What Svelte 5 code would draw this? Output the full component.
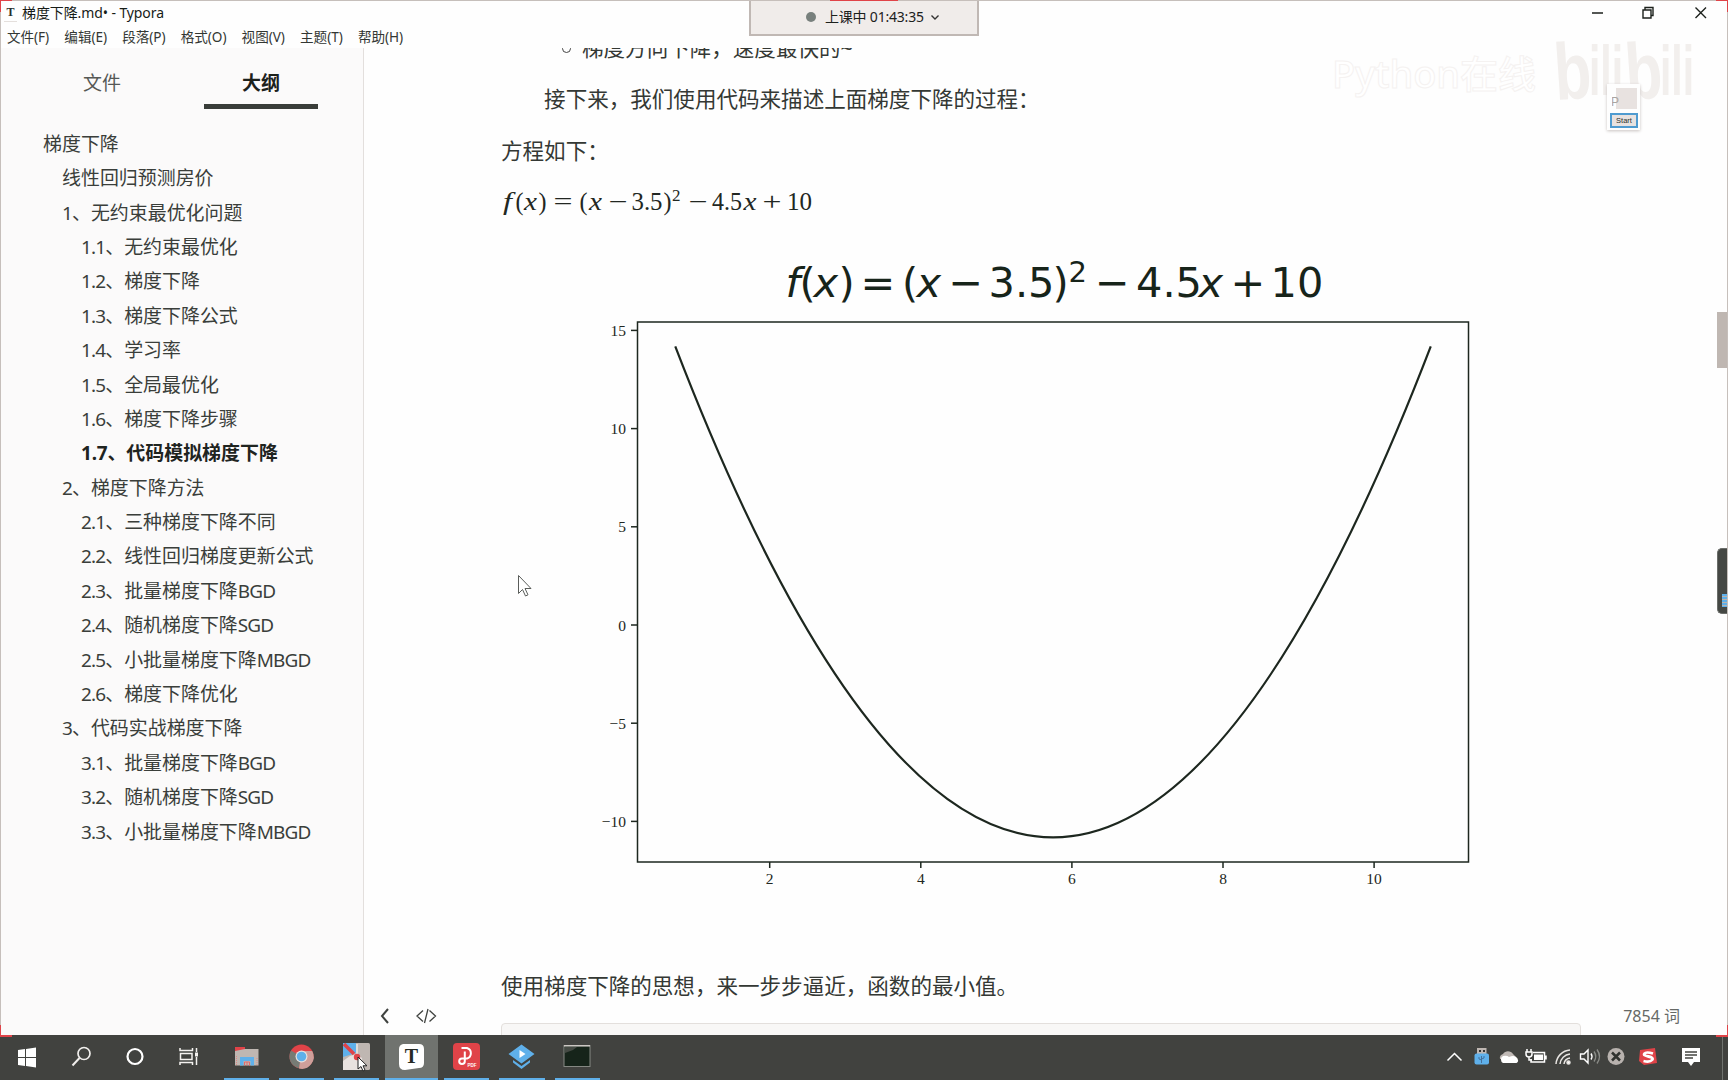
<script>
  const menus = ['文件(F)', '编辑(E)', '段落(P)', '格式(O)', '视图(V)', '主题(T)', '帮助(H)'];
  const outline = [
    [0, '梯度下降'],
    [1, '线性回归预测房价'],
    [1, '1、无约束最优化问题'],
    [2, '1.1、无约束最优化'],
    [2, '1.2、梯度下降'],
    [2, '1.3、梯度下降公式'],
    [2, '1.4、学习率'],
    [2, '1.5、全局最优化'],
    [2, '1.6、梯度下降步骤'],
    [2, '1.7、代码模拟梯度下降'],
    [1, '2、梯度下降方法'],
    [2, '2.1、三种梯度下降不同'],
    [2, '2.2、线性回归梯度更新公式'],
    [2, '2.3、批量梯度下降BGD'],
    [2, '2.4、随机梯度下降SGD'],
    [2, '2.5、小批量梯度下降MBGD'],
    [2, '2.6、梯度下降优化'],
    [1, '3、代码实战梯度下降'],
    [2, '3.1、批量梯度下降BGD'],
    [2, '3.2、随机梯度下降SGD'],
    [2, '3.3、小批量梯度下降MBGD']
  ];
  const active = 9;
  // Latin runs are set slightly tighter than the CJK text around them
  const runs = (s) => s.match(/[\x20-\x7e]+|[^\x20-\x7e]+/g).map((t) => ({ t, latin: /^[\x20-\x7e]/.test(t) }));

  const px = (x) => 769.7 + (x - 2) * 75.55;
  const py = (y) => 625 - y * 19.64;
  const xTicks = [2, 4, 6, 8, 10];
  const yTicks = [15, 10, 5, 0, -5, -10];
  const curve = `M${px(0.75)} ${py(14.1875)}Q${px(5.75)} ${2 * py(-10.8125) - py(14.1875)} ${px(10.75)} ${py(14.1875)}`;
  const title = [
    [785.5, 'f', 1], [799.5, '('], [813.5, 'x', 1], [838.5, ')'], [860.5, '='], [902, '('], [916.5, 'x', 1],
    [948.5, '−'], [988.5, '3.5'], [1052.5, ')'], [1095, '−'], [1136, '4.5'], [1198.5, 'x', 1], [1230.5, '+'], [1270.5, '10']
  ];
  // x, glyphs, italic, set width
  const formula = [
    [503, 'f', 1, 9], [515.5, '(', 0, 8], [524, 'x', 1, 13], [538.5, ')', 0, 8], [553.5, '=', 0, 19], [579.5, '(', 0, 8], [589, 'x', 1, 13],
    [608.5, '−', 0, 19], [631.5, '3.5', 0, 31], [663.5, ')', 0, 8], [688.5, '−', 0, 19], [712, '4.5', 0, 30], [743.5, 'x', 1, 13], [762.500, '+', 0, 19], [787, '10', 0, 25]
  ];
</script>

<div class="window">
  <header class="titlebar">
    <span class="appicon">T</span>
    <span class="doc">梯度下降.md• - Typora</span>
    <svg class="controls" width="130" height="26" viewBox="0 0 130 26" fill="none" stroke="#1c211c" stroke-width="1.4">
      <path d="M4 12h11M55 9h8v8h-8zM57 9V6.500h8v8h-2" />
      <path d="M107.500 6.500l10.500 10.500M118 6.500L107.500 17" />
    </svg>
  </header>
  <nav class="menubar">
    {#each menus as m}<span>{m}</span>{/each}
  </nav>

  <div class="body">
    <aside>
      <div class="tabs">
        <div class="tab">文件</div>
        <div class="tab on">大纲</div>
      </div>
      <ul>
        {#each outline as [level, text], i}
          <li class="l{level}" class:active={i === active}>{#each runs(text) as r}<span class:latin={r.latin}>{r.t}</span>{/each}</li>
        {/each}
      </ul>
    </aside>

    <main>
      <div class="bullet"><i></i>梯度方向下降，速度最快的~</div>
      <p class="indent">接下来，我们使用代码来描述上面梯度下降的过程：</p>
      <p class="eq">方程如下：</p>
      <svg class="formula" width="340" height="40" viewBox="501 182 340 40">
        {#each formula as [x, t, it, w]}<text {x} y="210" class:it textLength={w} lengthAdjust="spacingAndGlyphs">{t}</text>{/each}
        <text x="672" y="201" class="sup">2</text>
      </svg>
      <svg class="plot" width="1080" height="680" viewBox="501 240 1080 680">
        <g class="title">
          {#each title as [x, t, it]}<text {x} y="297" class:it>{t}</text>{/each}
          <text x="1068.5" y="281.5" class="sup">2</text>
        </g>
        <rect x="637.5" y="322" width="831" height="540" />
        <path class="curve" d={curve} />
        {#each xTicks as v}
          <path d="M{px(v)} 862v6" />
          <text x={px(v)} y="884" text-anchor="middle">{v}</text>
        {/each}
        {#each yTicks as v}
          <path d="M637 {py(v)}h-6" />
          <text x="626" y={py(v) + 5.5} text-anchor="end">{v < 0 ? '−' + -v : v}</text>
        {/each}
      </svg>
      <p class="last">使用梯度下降的思想，来一步步逼近，函数的最小值。</p>
      <div class="code"></div>
    </main>

    <div class="foot">
      <svg width="70" height="24" viewBox="0 0 70 24" fill="none" stroke="#3f423f">
        <path d="M12 6l-6 7 6 7" stroke-width="2" />
        <path d="M47 7.500l-6 5.500 6 5.500M53.500 7.500l6 5.500-6 5.500M52 6l-3.500 14" stroke-width="1.300" />
      </svg>
      <span>7854 词</span>
    </div>
  </div>

  <footer class="taskbar">
    <div class="sys">
      <svg viewBox="0 0 54 44"><path fill="#fff" d="M18 15l7-1v8h-7zM26 13.900l10-1.400V22H26zM18 23h7v8l-7-1zM26 23h10v9.400L26 31z" /></svg>
      <svg viewBox="0 0 54 44" fill="none" stroke="#f0eeec"><circle cx="30" cy="18.500" r="6" stroke-width="1.700" /><path d="M25.500 23L18.500 30.500" stroke-width="2" /></svg>
      <svg viewBox="0 0 54 44" fill="none" stroke="#fff" stroke-width="2.200"><circle cx="27" cy="21.500" r="7.500" /></svg>
      <svg viewBox="0 0 54 44" fill="none" stroke="#f4f2f0" stroke-width="1.500"><path d="M18 13v2.500h12.500V13M18.500 18.500h11.500v6H18.500zM18 30v-2.500h12.500V30M34.500 13v4M34.500 22v8" /><path d="M34.500 17.500v4" stroke-width="3" /></svg>
    </div>
    <div class="apps">
      <div class="app"><svg viewBox="0 0 55 44">
        <path fill="#e04348" d="M16 12h10v4H16z" /><path fill="#bfb7b2" d="M16 16l10-2h13.500v16.500H16z" />
        <path fill="#5fb0ea" d="M21 22h14v8.500h-3.500V26h-7v4.500H21z" /><path d="M25.500 30.500V27h5v3.500M28 27v3.500" fill="none" stroke="#e46a6b" /><path d="M17.500 21v9M38 23v7" stroke="#dc8a87" stroke-dasharray="1 1" />
      </svg></div>
      <div class="app"><svg viewBox="0 0 55 44">
        <circle cx="27.500" cy="21.500" r="12" fill="#e04348" /><path d="M27.500 21.500L17 15.500a12 12 0 0 0 8 17.700z" fill="#777b75" />
        <path d="M27.500 16h10.700a12 12 0 0 1-13.200 17.500z" fill="#cf9f9a" /><circle cx="27.500" cy="21.500" r="6" fill="#e8e2df" /><circle cx="27.500" cy="21.500" r="4.800" fill="#5fb0ea" />
      </svg></div>
      <div class="app"><svg viewBox="0 0 55 44">
        <rect x="14" y="8" width="27" height="27" rx="1.500" fill="#bfb7b2" /><path fill="#5fb0ea" d="M14 8h13v10L14 22z" />
        <path fill="#e8e2df" d="M14 26l7-5 6-2 6 4 1 12H14z" /><path stroke="#e04348" stroke-width="3.500" d="M15 9l10 10" /><path d="M28 9v12" stroke="#fff" /><circle cx="28" cy="22" r="3.200" fill="#e04348" />
        <path d="M29 22v12l3-2.500 2 4.500 2-1-2-4.200h4z" fill="#fff" stroke="#222" />
      </svg></div>
      <div class="app sel"><svg viewBox="0 0 55 44">
        <path fill="#fff" d="M19 9h16q5 0 5 5v14q0 5-5 5l-14 2q-6 0-6-6V14q0-4 4-5z" />
        <text x="27.500" y="28" text-anchor="middle" class="tglyph">T</text>
      </svg></div>
      <div class="app"><svg viewBox="0 0 55 44">
        <rect x="14" y="8" width="27" height="27" rx="4" fill="#e04348" />
        <path d="M22.500 13h5.500a5.500 5.500 0 0 1 0 10.500h-5a2.800 2.800 0 1 0 2.800 2.800V16.500" fill="none" stroke="#fff" stroke-width="2" />
        <text x="28.500" y="31.500" class="pdf">PDF</text>
      </svg></div>
      <div class="app"><svg viewBox="0 0 55 44">
        <path fill="#5fb0ea" d="M27.500 9.500l13 9.500-13 9.500-13-9.500zM19 25l8.500 6 8.500-6v2.500l-8.500 6.500-8.500-6.500z" /><path fill="#fff" d="M25.500 15l6 4-6 4z" />
      </svg></div>
      <div class="app"><svg viewBox="0 0 55 44">
        <rect x="14" y="10.500" width="26" height="21" fill="#16241a" stroke="#858883" /><path d="M14 10.800h26" stroke="#d0cbc7" stroke-width="1.500" /><path d="M15 12h12l-4 3-8 3z" fill="#454a44" />
      </svg></div>
    </div>
    <div class="tray">
      <svg viewBox="0 0 27 44" fill="none" stroke="#fff" stroke-width="1.500"><path d="M6.500 25.500l7-7 7 7" /></svg>
      <svg viewBox="0 0 27 44"><path fill="#bfb7b2" d="M9 13h9.500v6H9z" /><rect x="6.500" y="18.500" width="14.500" height="11" rx="2" fill="#5fb0ea" /><path fill="#333" d="M11 15h2v2h-2zM15 15h2v2h-2z" /><path stroke="#45709a" d="M13.500 28v-7M11 22v2l2.500 1M16 21v2l-2.500 1" fill="none" /></svg>
      <svg viewBox="0 0 27 44"><path fill="#c0b9b5" d="M5 24a4 4 0 0 1 3-5 6 6 0 0 1 10 0l5 5z" /><path fill="#fff" d="M8 28a4 4 0 0 1 0-7q4-1 6 1 6-3 8.500 2a2.500 2.500 0 0 1-1 4z" /></svg>
      <svg viewBox="0 0 27 44" fill="none" stroke="#fff" stroke-width="1.500"><path d="M11 17.500h11.500v9.500H9v-3M24 20.500v4M5 14v3M9 14v3M4 17h6v2q0 3-3 3t-3-3zM7 22v3h3" /><path fill="#fff" stroke="none" d="M12 19.500h9v5.500h-9z" /></svg>
      <svg viewBox="0 0 27 44" fill="none" stroke="#e8e5e2" stroke-width="1.500"><path d="M7 29A15 15 0 0 1 21 15M11 29A11 11 0 0 1 21 19M15 29a7 7 0 0 1 6-6" /><circle cx="19.500" cy="27.500" r="1.500" fill="#fff" /></svg>
      <svg viewBox="0 0 27 44" fill="none" stroke="#fff" stroke-width="1.400"><path d="M4.500 19h3.500l4-4v13l-4-4H4.500z" /><path d="M15 18.500q2 3 0 6" /><path d="M18 16.500q3.500 5 0 10M21 14.500q5 7 0 14" stroke="#898b87" /></svg>
      <svg viewBox="0 0 27 44"><circle cx="13" cy="21.500" r="8.500" fill="#b8b2ae" /><path d="M9 17.500l8 8M17 17.500l-8 8" stroke="#30332f" stroke-width="2.500" /></svg>
      <svg class="sogou" viewBox="0 0 36 44"><path fill="#e04348" d="M10 15l15-2 2 15-13 2-5-4z" /><path d="M23 18.500q-7-2-8.500 0t4 3 3.500 3.500-8.500 1" fill="none" stroke="#fff" stroke-width="2.800" /></svg>
      <svg class="note" viewBox="0 0 50 44"><path fill="#fff" d="M16 13h18v14h-6l-3 4-3-4h-6z" /><path d="M19 17h12M19 20h12M19 23h8" stroke="#444642" stroke-width="1.300" /></svg>
    </div>
  </footer>

  <div class="session"><i></i><span>上课中 01:43:35</span>
    <svg width="10" height="7" viewBox="0 0 10 7" fill="none" stroke="#333" stroke-width="1.400"><path d="M1.500 1.500L5 5l3.500-3.500" /></svg>
  </div>
  <svg class="watermark" width="380" height="70" viewBox="1320 35 380 70">
    <text x="1332" y="88" textLength="204" class="ghost">Python在线</text>
    <g class="brand">
      <text x="1554" y="99" class="b" transform="rotate(-4 1570 70)" textLength="37" lengthAdjust="spacingAndGlyphs">b</text>
      <text x="1589" y="95" textLength="34" lengthAdjust="spacingAndGlyphs">ili</text>
      <text x="1625" y="99" class="b" transform="rotate(-4 1642 70)" textLength="37" lengthAdjust="spacingAndGlyphs">b</text>
      <text x="1660" y="95" textLength="34" lengthAdjust="spacingAndGlyphs">ili</text>
    </g>
  </svg>
  <div class="mini"><div class="pic">P</div><div class="start">Start</div></div>
  <div class="thumb"></div>
  <div class="handle"><i></i></div>
  <svg class="cursor" width="16" height="24" viewBox="0 0 16 24"><path d="M1.500 1.500v18l4-4 3 6.500 2.500-1.200-3-6.300H14z" fill="#fff" stroke="#5a5d5a" /></svg>
  <div class="edge"></div>
  <i class="corner tl"></i><i class="corner tr"></i><i class="corner bl"></i><i class="corner br"></i><i class="corner tm"></i>
</div>

<style>
  :global(body) { margin: 0; overflow: hidden; }
  .window {
    position: relative; width: 1728px; height: 1080px; overflow: hidden; background: #fefefe; color: #2b2f2b;
    display: flex; flex-direction: column; font-family: 'Noto Sans', 'Noto Sans CJK SC', sans-serif;
  }
  svg { display: block; }
  .titlebar { height: 27px; display: flex; align-items: center; box-sizing: border-box; padding-left: 4px; }
  .appicon { width: 13px; height: 16px; border-bottom: 1px solid #e4dfdc; text-align: center; font: bold 12px/15px 'Liberation Serif', serif; }
  .doc { margin: -3px 0 0 5px; font-size: 14px; letter-spacing: -.1px; color: #171c17; white-space: pre; }
  .controls { margin-left: auto; margin-right: 10px; }
  .menubar { height: 21px; display: flex; padding-left: 7px; gap: 15.200px; font-size: 13.600px; line-height: 20px; letter-spacing: -.05px; color: #333733; }
  .body { position: relative; height: 987px; display: flex; }
  aside { width: 363px; box-sizing: content-box; border-right: 1px solid #e3dfdd; background: #fbfafa; }
  .tabs { display: flex; height: 61px; padding: 0 45px; }
  .tab { box-sizing: border-box; width: 114px; height: 61px; border-bottom: 5px solid transparent; text-align: center; font-size: 19px; line-height: 71px; color: #555855; }
  .tab + .tab { margin-left: 45px; }
  .on { border-color: #393d39; font-weight: 700; color: #1c211c; }
  ul { list-style: none; margin: 17.800px 0 0; padding: 0; }
  li { height: 34.400px; line-height: 34.400px; font-size: 18.950px; white-space: nowrap; color: #3a3e3a; }
  .l0 { padding-left: 43px; }
  .l1 { padding-left: 62px; }
  .l2 { padding-left: 81px; }
  .latin { letter-spacing: -.85px; }
  .active { font-weight: 700; color: #1f241f; }
  .active .latin { letter-spacing: -.2px; }
  main { width: 1080px; padding-left: 137px; overflow: hidden; font-size: 21.550px; color: #343834; }
  .bullet { height: 14px; padding-left: 81px; line-height: 36px; margin-top: -18px; padding-bottom: 18px; position: relative; white-space: nowrap; }
  .bullet i { position: absolute; left: 61px; top: 14px; width: 7px; height: 7px; border: 1px solid #444; border-radius: 50%; }
  p { margin: 0; height: 52px; line-height: 50.500px; white-space: nowrap; }
  .indent { text-indent: 2em; padding-top: 12px; }
  .eq { height: 70px; }
  .formula { font-family: 'Liberation Serif', serif; font-size: 25px; fill: #222722; margin-top: -14px; }
  .it { font-style: italic; }
  .formula .sup { font-size: 17px; }
  .plot { margin-top: 18px; font-family: 'Liberation Serif', serif; font-size: 15.500px; fill: #222722; }
  .plot rect, .plot path { fill: none; stroke: #1d271f; stroke-width: 1.500; }
  .plot .curve { stroke-width: 2.200; }
  .title { font-family: 'DejaVu Sans', sans-serif; font-size: 41.500px; fill: #17241a; }
  .title .sup { font-size: 29px; }
  .last { margin-top: 40px; line-height: 52px; }
  .code { height: 40px; margin-top: 11px; border: 1px solid #e3dfdc; border-radius: 4px; background: #f8f7f6; }
  .foot { position: absolute; left: 376px; right: 48px; bottom: 8px; display: flex; justify-content: space-between; align-items: center; height: 24px; font-size: 16px; color: #666966; }
  .taskbar { height: 45px; display: flex; background: #41423f; }
  .sys { display: flex; width: 218.500px; }
  .sys svg { width: 54px; height: 44px; }
  .apps { display: flex; }
  .app { box-sizing: border-box; width: 55.200px; height: 45px; position: relative; }
  .app svg { width: 55px; height: 44px; }
  .app::after { content: ''; position: absolute; bottom: 0; left: 5px; right: 5px; height: 2px; background: #5fb0ea; }
  .sel { background: linear-gradient(90deg, transparent 1px, #70736f 1px 54px, transparent 54px); }
  .sel::after { left: 1px; right: 1px; }
  .tglyph { font: bold 20px 'Liberation Serif', serif; fill: #252a25; }
  .pdf { font: bold 4.500px 'Liberation Sans', sans-serif; fill: #fff; }
  .tray { display: flex; margin-left: auto; padding-right: 6px; border-right: 1px solid #70736f; margin-right: 5px; }
  .tray svg { width: 27px; height: 44px; }
  .tray .sogou { width: 36px; }
  .tray .note { width: 50px; }
  .session { position: absolute; left: 749px; top: 0; width: 226px; height: 33px; border: 2px solid #c0b8b4; border-top-width: 1px; background: #f0ecea; display: flex; align-items: center; font-size: 14px; color: #1c211c; }
  .session i { width: 10px; height: 10px; border-radius: 50%; background: #78807d; margin: -2px 0 0 55px; }
  .session span { margin: -3px 0 0 9px; width: 100px; white-space: nowrap; letter-spacing: -.2px; }
  .session svg { margin-left: 5px; }
  .watermark { position: absolute; left: 1320px; top: 35px; }
  .ghost { font: 500 38px 'Noto Sans', 'Noto Sans CJK SC', sans-serif; fill: #fff; stroke: #f5f2f1; stroke-width: 1; }
  .brand { font: bold 70px 'Liberation Sans', sans-serif; fill: #f2efed; }
  .b { font-size: 80px; }
  .mini { position: absolute; left: 1607px; top: 84px; width: 33px; height: 46px; box-shadow: 0 1px 3px #c9c3c0; background: #fefefe; }
  .pic { margin: 4px 0 0 5px; width: 25px; height: 21px; box-sizing: border-box; background: linear-gradient(90deg, transparent 4px, #e8e2e0 4px); font: 12px/28px 'Liberation Sans', sans-serif; color: #aaa5a1; clip-path: inset(0); text-indent: -1px; }
  .start { margin: 4px 0 0 3px; width: 24px; height: 11px; border: 2px solid #4f9bd0; background: #e8e2e0; font: 7.500px/11px 'Liberation Sans', sans-serif; text-align: center; }
  .thumb { position: absolute; right: 0; top: 312px; width: 11px; height: 56px; background: #bfb7b2; }
  .handle { position: absolute; right: 0; top: 548px; width: 10px; height: 64px; border: 1px solid #6b6e6a; border-right: 0; border-radius: 5px 0 0 5px; background: #454844; }
  .handle i { position: absolute; left: 4px; bottom: 6px; width: 5px; height: 13px; background: repeating-linear-gradient(#5fb0ea 0 2px, #b9b4b0 2px 3px); }
  .cursor { position: absolute; left: 517px; top: 574px; }
  .edge { position: absolute; left: 0; top: 0; width: 1726px; height: 1034px; border: 1px solid #c6bfbb; border-bottom: 0; pointer-events: none; }
  .corner { position: absolute; background: #e04348; }
  .tl, .tr, .bl, .br { width: 12px; height: 12px; background: none; box-sizing: border-box; border: 0 solid #e04348; }
  .tl { left: 0; top: 0; border-left-width: 1px; border-top-width: 1px; }
  .tr { right: 0; top: 0; border-right-width: 1px; border-top-width: 1px; }
  .bl { left: 0; top: 1025px; border-left-width: 1px; border-bottom-width: 2px; }
  .br { right: 0; top: 1025px; border-right-width: 1px; border-bottom-width: 2px; }
  .tm { left: 830px; top: 0; width: 68px; height: 1px; }
</style>
